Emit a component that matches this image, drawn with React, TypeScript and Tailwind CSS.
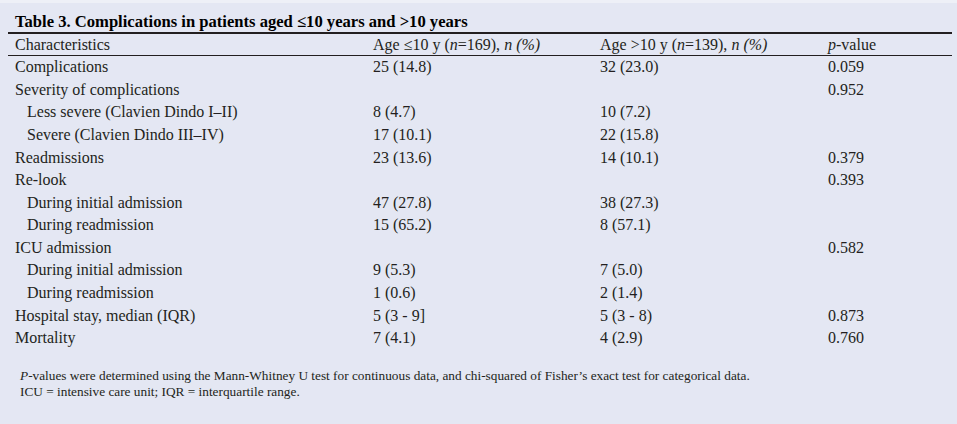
const rows: Array<{ label: string; sub?: boolean; a?: string; b?: string; p?: string }> = [
  { label: "Complications", a: "25 (14.8)", b: "32 (23.0)", p: "0.059" },
  { label: "Severity of complications", p: "0.952" },
  { label: "Less severe (Clavien Dindo I–II)", sub: true, a: "8 (4.7)", b: "10 (7.2)" },
  { label: "Severe (Clavien Dindo III–IV)", sub: true, a: "17 (10.1)", b: "22 (15.8)" },
  { label: "Readmissions", a: "23 (13.6)", b: "14 (10.1)", p: "0.379" },
  { label: "Re-look", p: "0.393" },
  { label: "During initial admission", sub: true, a: "47 (27.8)", b: "38 (27.3)" },
  { label: "During readmission", sub: true, a: "15 (65.2)", b: "8 (57.1)" },
  { label: "ICU admission", p: "0.582" },
  { label: "During initial admission", sub: true, a: "9 (5.3)", b: "7 (5.0)" },
  { label: "During readmission", sub: true, a: "1 (0.6)", b: "2 (1.4)" },
  { label: "Hospital stay, median (IQR)", a: "5 (3 - 9]", b: "5 (3 - 8)", p: "0.873" },
  { label: "Mortality", a: "7 (4.1)", b: "4 (2.9)", p: "0.760" },
]

export default function App() {
  return (
    <div
      className="w-[957px] h-[424px] bg-[#e4e7f3] border-t-[3px] border-[#eef0f7] text-[#231f20] pl-[8px] pr-[5px]"
      style={{ fontFamily: '"Liberation Serif", serif' }}
    >
      <div className="h-[29px] flex items-end pl-[7px] pb-[1px] text-[16.6px] font-bold text-black leading-none">
        Table 3. Complications in patients aged ≤10 years and &gt;10 years
      </div>
      <div className="border-t-2 border-[#231f20]" />
      <div className="grid grid-cols-[358px_227px_228px_1fr] h-[22px] items-center pl-[7px] text-[16px] leading-none border-b border-[#231f20]">
        <div>Characteristics</div>
        <div>
          Age ≤10 y (<i>n</i>=169), <i>n (%)</i>
        </div>
        <div>
          Age &gt;10 y (<i>n</i>=139), <i>n (%)</i>
        </div>
        <div>
          <i>p</i>-value
        </div>
      </div>
      <div className="flex flex-col">
        {rows.map((r, i) => (
          <div
            key={i}
            className="grid grid-cols-[358px_227px_228px_1fr] h-[22.58px] items-center pl-[7px] text-[16px] leading-none"
          >
            <div className={r.sub ? "pl-[12px]" : ""}>{r.label}</div>
            <div>{r.a}</div>
            <div>{r.b}</div>
            <div>{r.p}</div>
          </div>
        ))}
      </div>
      <div className="pt-[18px] pl-[12px] text-[13.3px] leading-[16px]">
        <div>
          <i>P</i>-values were determined using the Mann-Whitney U test for continuous data, and chi-squared of Fisher’s
          exact test for categorical data.
        </div>
        <div>ICU = intensive care unit; IQR = interquartile range.</div>
      </div>
    </div>
  )
}
